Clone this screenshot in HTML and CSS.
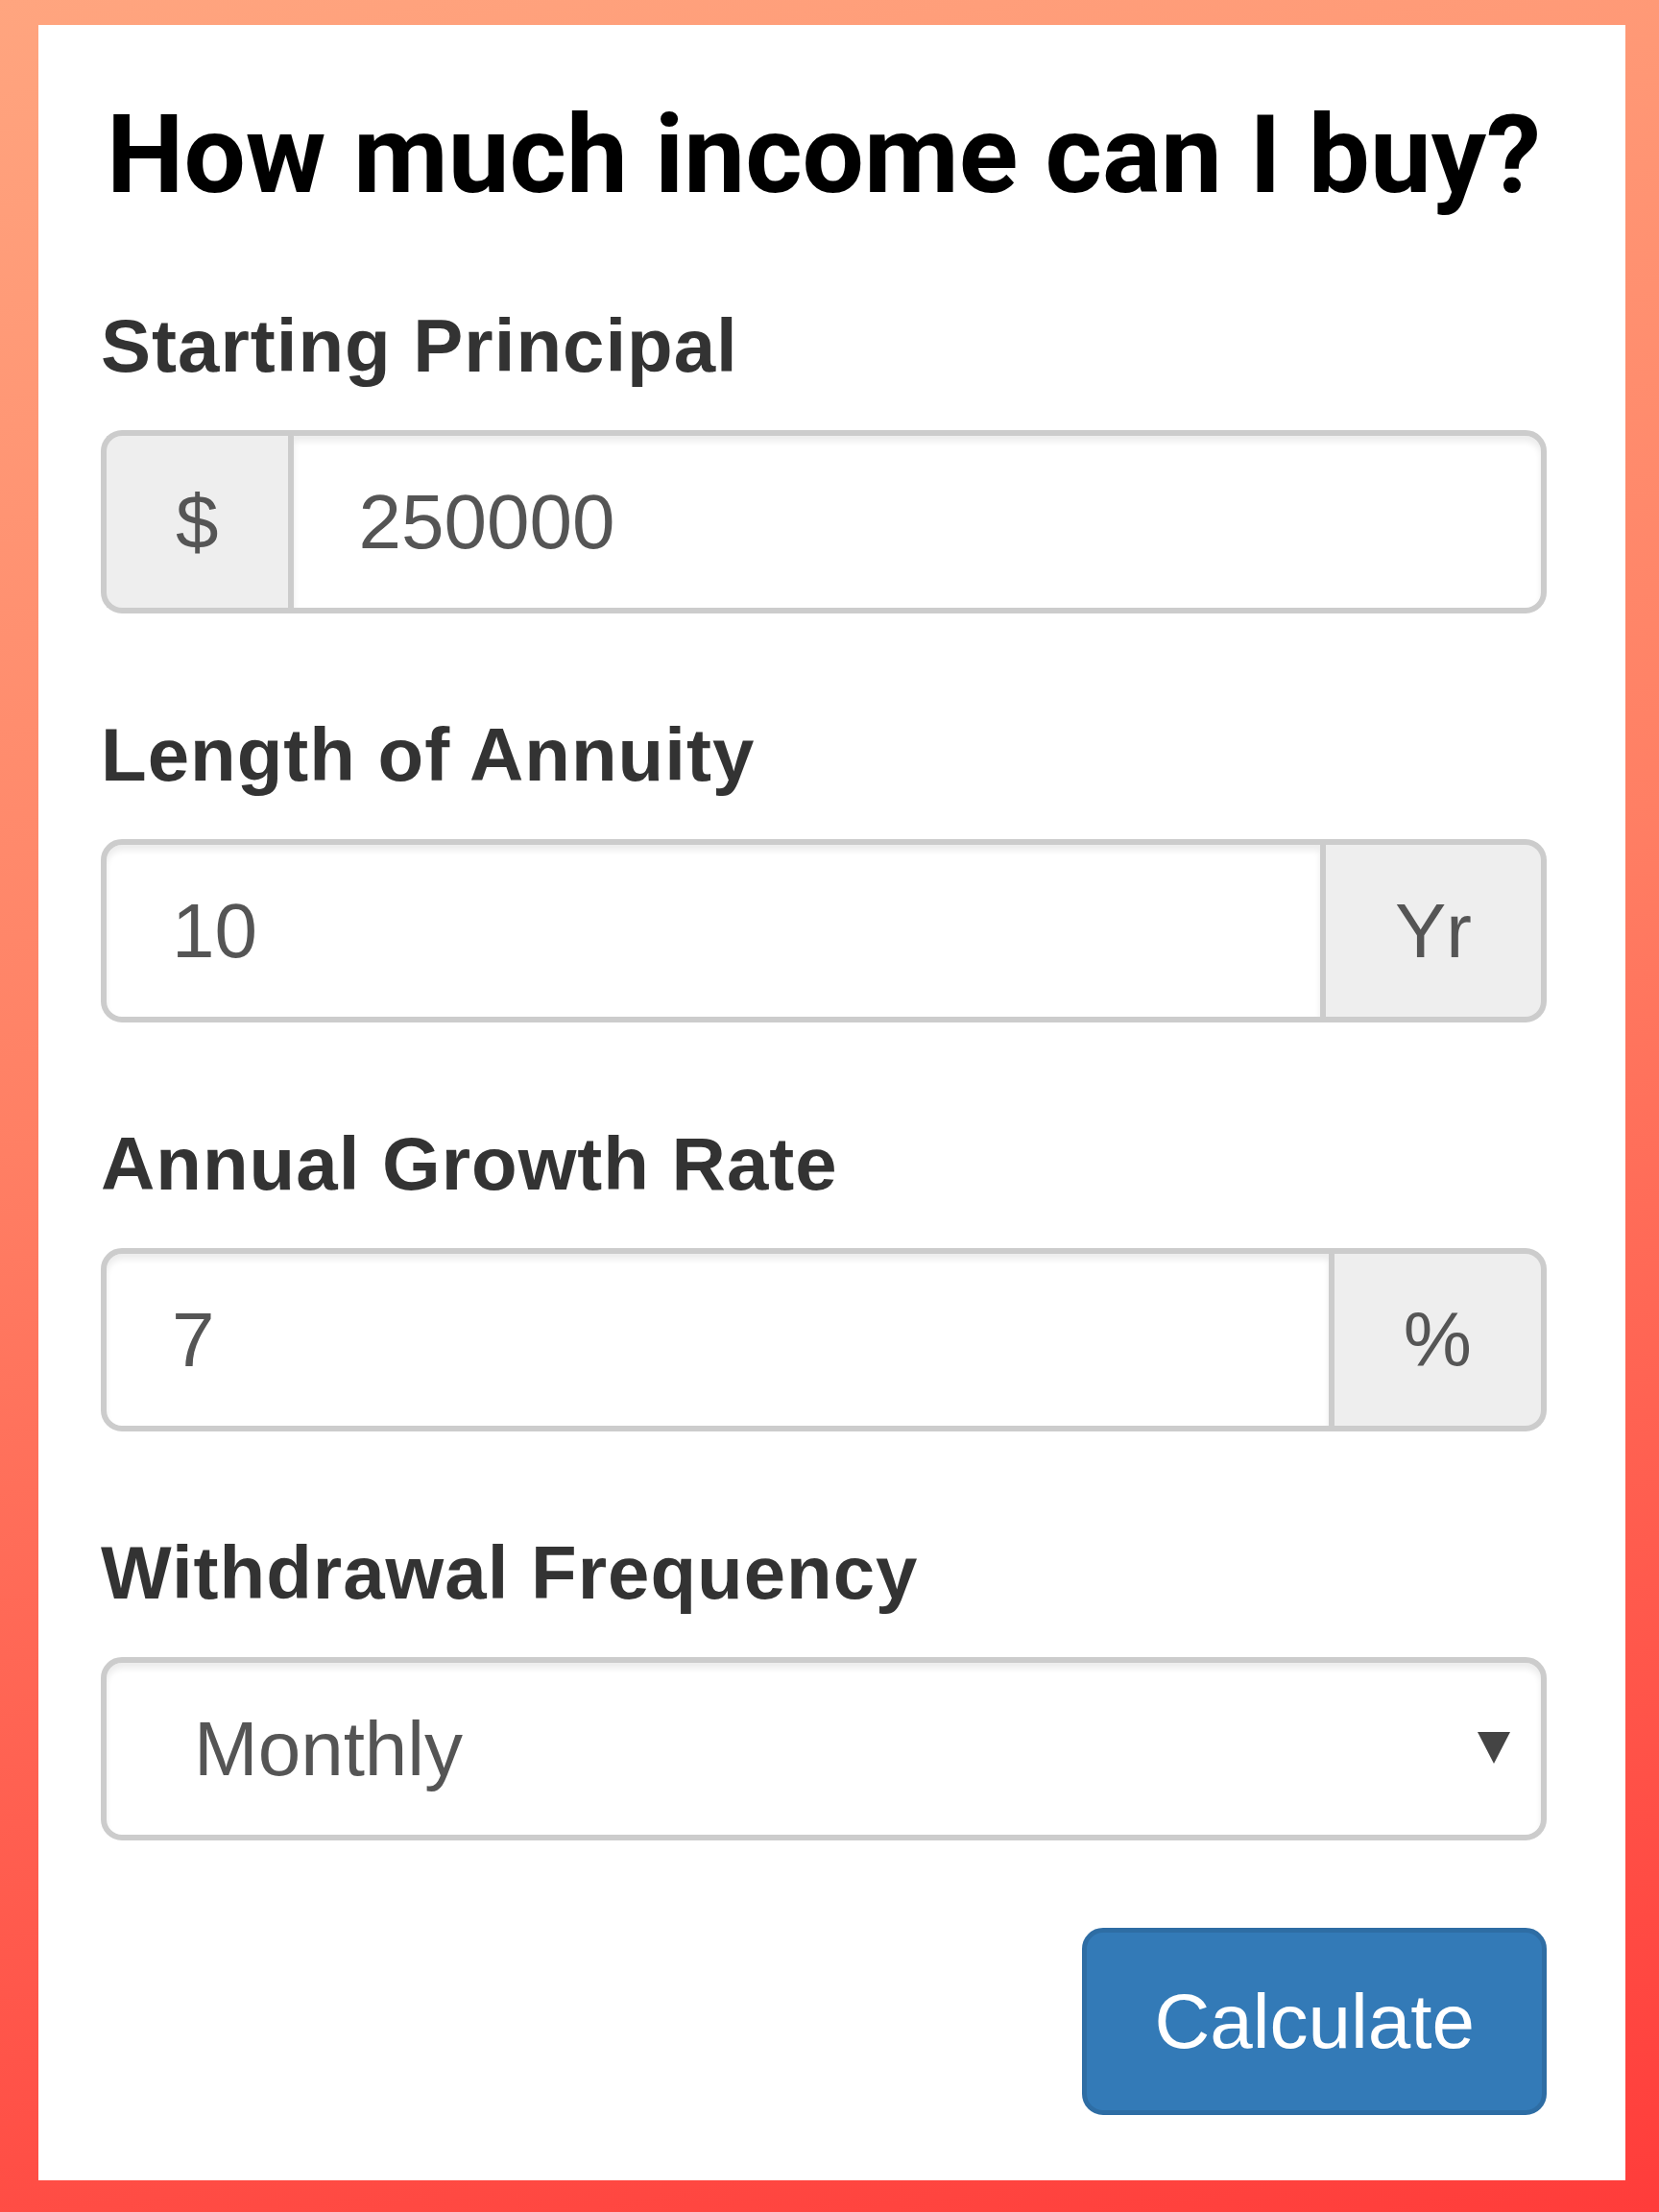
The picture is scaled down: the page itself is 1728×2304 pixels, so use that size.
FILE: index.html
```html
<!DOCTYPE html>
<html lang="en">
<head>
<meta charset="UTF-8" />
<meta name="viewport" content="width=device-width, initial-scale=1" />
<title>Annuity Calculator</title>
<link rel="stylesheet" href="styles.css">
</head>
<body>

<div class="frame">
  <form class="card" onsubmit="return false;">
    <h1>How much income can I buy?</h1>

    <div class="form-group">
      <label for="principal">Starting Principal</label>
      <div class="input-group">
        <span class="addon addon-left">$</span>
        <input id="principal" type="text" value="250000" />
      </div>
    </div>

    <div class="form-group">
      <label for="years">Length of Annuity</label>
      <div class="input-group">
        <input id="years" type="text" value="10" />
        <span class="addon addon-right">Yr</span>
      </div>
    </div>

    <div class="form-group">
      <label for="rate">Annual Growth Rate</label>
      <div class="input-group">
        <input id="rate" type="text" value="7" />
        <span class="addon addon-right">%</span>
      </div>
    </div>

    <div class="form-group">
      <label for="freq">Withdrawal Frequency</label>
      <div class="select-wrap">
        <select id="freq">
          <option>Monthly</option>
          <option>Quarterly</option>
          <option>Annually</option>
        </select>
      </div>
    </div>

    <div class="actions">
      <button type="submit">Calculate</button>
    </div>
  </form>
</div>

</body>
</html>
```

FILE: styles.css
```css
html, body {
  margin: 0;
  padding: 0;
}
body {
  background: linear-gradient(168deg, #ffa57f 0%, #ff7f64 45%, #ff3c3a 100%);
  font-family: "Liberation Sans", Arial, sans-serif;
  color: #333;
}
.frame {
  padding: 26px 35px 33px 40px;
  min-height: 100vh;
  box-sizing: border-box;
}
.card {
  background: #fff;
  padding: 66px 82px 68px 65px;
  display: block;
}
h1 {
  font-family: Roboto, "Liberation Sans", sans-serif;
  font-weight: 700;
  font-size: 114px;
  line-height: 138px;
  color: #000;
  text-align: center;
  margin: 0 0 74px;
  white-space: nowrap;
}
.form-group {
  margin-bottom: 91px;
}
label {
  display: block;
  font-weight: 700;
  font-size: 78px;
  line-height: 112px;
  letter-spacing: 1px;
  margin-bottom: 32px;
  color: #333;
}
.input-group {
  display: flex;
  height: 191px;
}
input, select {
  box-sizing: border-box;
  font-family: "Liberation Sans", Arial, sans-serif;
  font-size: 80px;
  color: #555;
  border: 6px solid #ccc;
  border-radius: 22px;
  background: #fff;
  box-shadow: inset 0 6px 6px rgba(0,0,0,0.075);
  outline: none;
}
.input-group input {
  flex: 1;
  min-width: 0;
  height: 191px;
  padding: 0 68px;
}
.addon {
  display: flex;
  align-items: center;
  padding: 0 72px;
  background: #eee;
  border: 6px solid #ccc;
  font-size: 80px;
  color: #555;
}
.addon-left {
  border-right: 0;
  border-radius: 22px 0 0 22px;
}
.addon-left + input {
  border-radius: 0 22px 22px 0;
}
.addon-right {
  border-left: 0;
  border-radius: 0 22px 22px 0;
}
.input-group input:first-child {
  border-radius: 22px 0 0 22px;
}
.select-wrap {
  position: relative;
}
.select-wrap select {
  -webkit-appearance: none;
  appearance: none;
  width: 100%;
  height: 191px;
  padding: 0 90px 0 91px;
}
.select-wrap::after {
  content: "";
  position: absolute;
  right: 38px;
  top: 78px;
  border-left: 17px solid transparent;
  border-right: 17px solid transparent;
  border-top: 33px solid #444;
}
.actions {
  display: flex;
  justify-content: flex-end;
}
button {
  font-family: "Liberation Sans", Arial, sans-serif;
  font-size: 80px;
  color: #fff;
  background: #337ab7;
  border: 5px solid #2e6da4;
  border-radius: 22px;
  height: 195px;
  padding: 0 70px;
  cursor: pointer;
}
button:hover {
  background: #286090;
}
```
